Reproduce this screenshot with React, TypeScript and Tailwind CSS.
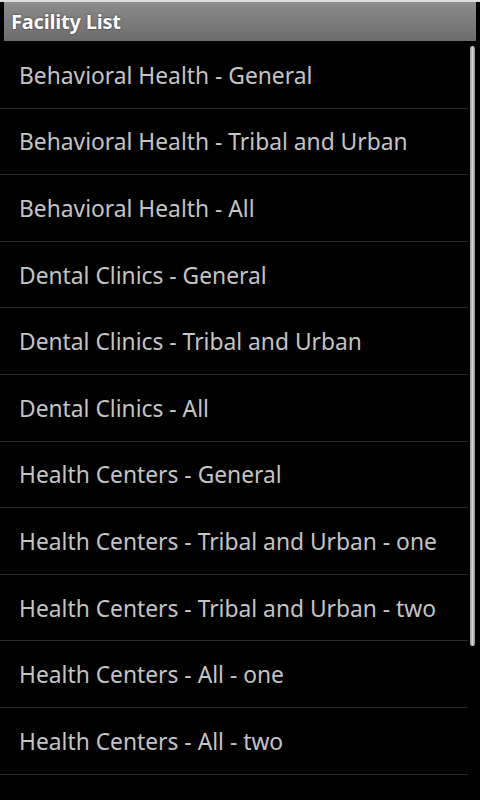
import React from "react";

const facilities = [
  "Behavioral Health - General",
  "Behavioral Health - Tribal and Urban",
  "Behavioral Health - All",
  "Dental Clinics - General",
  "Dental Clinics - Tribal and Urban",
  "Dental Clinics - All",
  "Health Centers - General",
  "Health Centers - Tribal and Urban - one",
  "Health Centers - Tribal and Urban - two",
  "Health Centers - All - one",
  "Health Centers - All - two",
];

export default function App() {
  return (
    <div className="w-[480px] h-[800px] bg-black overflow-hidden font-['Noto_Sans','Open_Sans',sans-serif]">
      {/* Title bar */}
      <div className="h-[42px] bg-black border-t-2 border-[#dcdcdc] px-[4px] pb-[1px]">
        <div className="h-full bg-gradient-to-b from-[#8c8c8c] to-[#6c6c6c] flex items-center pl-[7px]">
          <span className="text-white font-bold text-[20px] leading-none tracking-[-0.2px] [text-shadow:0_0_2px_rgba(0,0,0,0.7)]">
            Facility List
          </span>
        </div>
      </div>

      {/* List */}
      <div className="relative">
        <ul className="pr-[12px]">
          {facilities.map((name) => (
            <li
              key={name}
              className="h-[66.6px] flex items-center pl-[19px] pt-[3px] border-b border-[#2a2a2a] text-[#c4c4c4] text-[22.8px] leading-none"
            >
              {name}
            </li>
          ))}
        </ul>
        {/* Scrollbar thumb */}
        <div className="absolute right-[5px] top-[4px] w-[5px] h-[600px] rounded-full bg-gradient-to-r from-[#9a9a9a] via-[#d0d0d0] to-[#8a8a8a]" />
      </div>
    </div>
  );
}
